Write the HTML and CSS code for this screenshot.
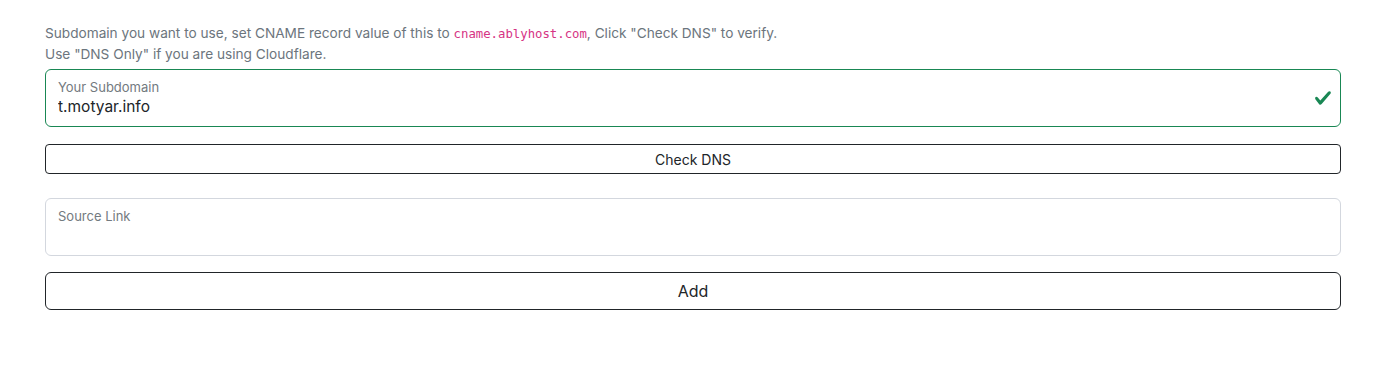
FILE: index.html
```html
<!DOCTYPE html>
<html lang="en">
<head>
    <meta charset="UTF-8">
    <meta name="viewport" content="width=device-width, initial-scale=1.0">
    <title>Add Subdomain</title>
    <link rel="stylesheet" href="styles.css">
</head>
<body>

<div class="container">
    <div class="form-text">
        Subdomain you want to use, set CNAME record value of this to <code>cname.ablyhost.com</code>, Click "Check DNS" to verify.<br>
        Use "DNS Only" if you are using Cloudflare.
    </div>

    <div class="form-floating is-valid">
        <input type="text" id="subdomain" value="t.motyar.info">
        <label for="subdomain">Your Subdomain</label>
        <svg class="valid-icon" viewBox="0 0 8 8" width="18" height="18">
            <path fill="#198754" d="M2.3 6.73.6 4.53c-.4-1.04.46-1.4 1.1-.8l1.1 1.4 3.4-3.8c.6-.63 1.6-.27 1.2.7l-4 4.6c-.43.5-.8.4-1.1.1z"/>
        </svg>
    </div>

    <button class="btn btn-sm">Check DNS</button>

    <div class="form-floating source">
        <input type="text" id="source-link" value="">
        <label for="source-link">Source Link</label>
    </div>

    <button class="btn">Add</button>
</div>

</body>
</html>
```

FILE: styles.css
```css
body {
    font-family: Inter, "Open Sans", Arial, sans-serif;
    color: #212529;
    background: #fff;
    margin: 0;
}
.container {
    padding: 23px 36px 0 45px;
}
.form-text {
    font-size: 13.65px;
    line-height: 20px;
    color: #6c757d;
    margin-bottom: 5px;
}
code {
    font-family: "DejaVu Sans Mono", "Liberation Mono", monospace;
    font-size: 12.3px;
    color: #d63384;
}
.form-floating {
    position: relative;
    margin-bottom: 17px;
}
.form-floating input {
    display: block;
    width: 100%;
    height: 58px;
    box-sizing: border-box;
    padding: 25px 12px 9px;
    font-family: inherit;
    font-size: 15.5px;
    line-height: 22px;
    color: #212529;
    border: 1px solid #d3d7de;
    border-radius: 6px;
    outline: none;
}
.form-floating label {
    position: absolute;
    top: 10px;
    left: 13px;
    font-size: 13px;
    line-height: 16px;
    color: #737a80;
}
.is-valid input {
    border-color: #198754;
    padding-right: 40px;
}
.valid-icon {
    position: absolute;
    right: 9px;
    top: 20px;
}
.btn {
    display: block;
    width: 100%;
    height: 38px;
    padding: 0 12px;
    font-family: inherit;
    font-size: 16px;
    color: #212529;
    background: #fff;
    border: 1px solid #212529;
    border-radius: 6px;
    cursor: pointer;
}
.btn-sm {
    height: 30px;
    font-size: 14px;
    border-radius: 4px;
}
.btn:hover {
    background: #212529;
    color: #fff;
}
.source {
    margin-top: 24px;
    margin-bottom: 16px;
}
```
